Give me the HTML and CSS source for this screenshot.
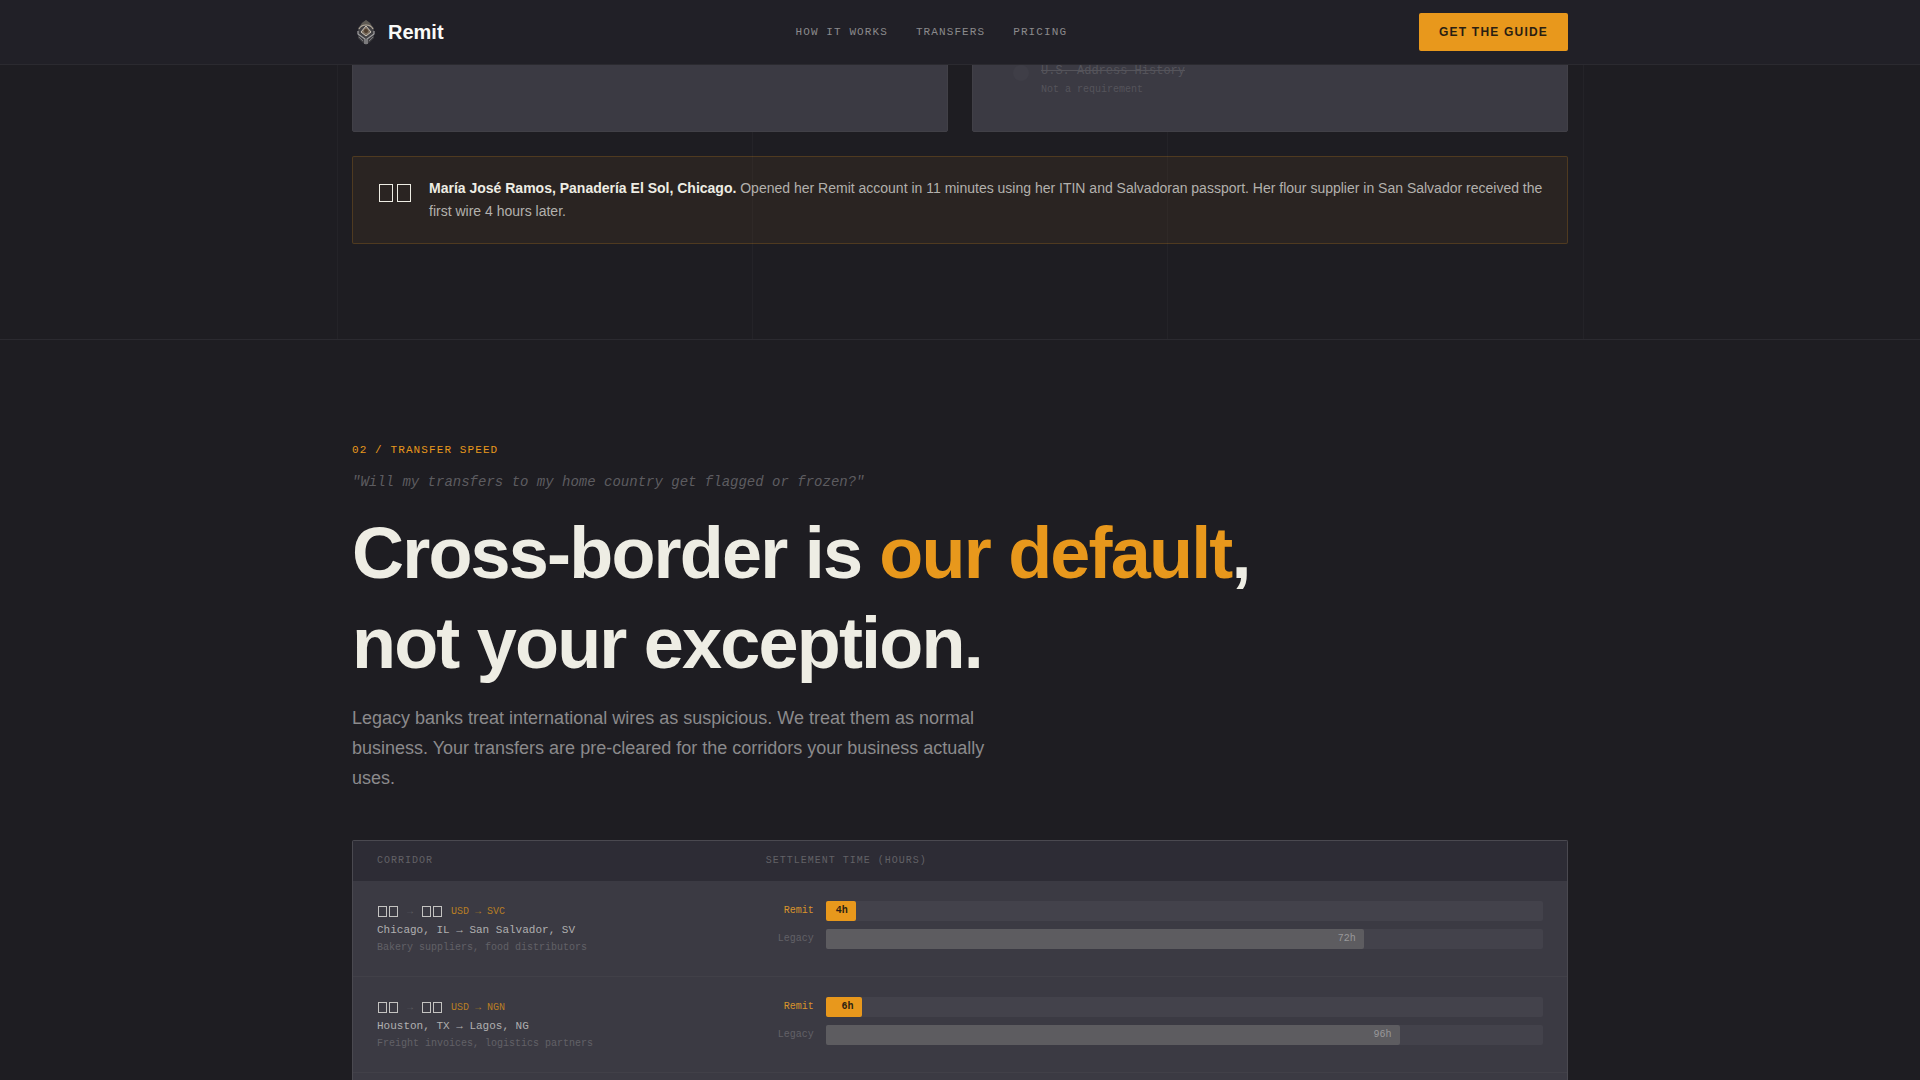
FILE: index.html
```html
<!DOCTYPE html>
<html lang="en">
<head>
<meta charset="utf-8">
<title>Remit</title>
<link rel="stylesheet" href="styles.css">
</head>
<body>
<header class="nav">
  <div class="wrap nav-inner">
    <a class="brand" href="#">
      <svg class="logo" viewBox="0 0 28 32" aria-hidden="true">
        <path d="M14 4 18 7 22 12v10l-4 4-4 3-4-3-4-4V12l4-5z" fill="#414043"/>
        <path d="M14 4 18 7 20 11 14 9 8 11 10 7z" fill="#5e5a54"/>
        <path d="M7 13q2-4 7-4t7 4" fill="none" stroke="#b5ab9c" stroke-width="1.2"/>
        <path d="M14 10 19 16 14 20 9 16z" fill="#796b5c" stroke="#c9c3b8"/>
        <circle cx="14" cy="15" r="2" fill="#4e3d2e"/>
        <path d="M6 15v3l7 5v5M22 15v3l-7 5v5" fill="none" stroke="#a2a1a3" stroke-width="1.2"/>
        <path d="M7 21l4 4M21 21l-4 4" fill="none" stroke="#77767a"/>
      </svg>
      <span>Remit</span>
    </a>
    <nav class="links">
      <a href="#how">How it works</a>
      <a href="#transfers">Transfers</a>
      <a href="#pricing">Pricing</a>
    </nav>
    <button class="cta" type="button">Get the guide</button>
  </div>
</header>
<main>
  <section class="docs" id="how">
    <div class="guides" aria-hidden="true"><i></i><i></i><i></i></div>
    <div class="wrap">
      <div class="cards">
        <div class="card"></div>
        <div class="card">
          <span class="dot"></span>
          <div>
            <s class="doc-name">U.S. Address History</s>
            <p class="doc-note">Not a requirement</p>
          </div>
        </div>
      </div>
      <div class="story">
        <span class="flag flag-large"><i></i><i></i></span>
        <p><strong>María José Ramos, Panadería El Sol, Chicago.</strong> Opened her Remit account in 11 minutes using her ITIN and Salvadoran passport. Her flour supplier in San Salvador received the first wire 4 hours later.</p>
      </div>
    </div>
  </section>
  <section class="speed" id="transfers">
    <div class="wrap">
      <p class="label">02 / Transfer speed</p>
      <p class="quote">"Will my transfers to my home country get flagged or frozen?"</p>
      <h2>Cross-border is <em>our default</em>,<br>not your exception.</h2>
      <p class="lead">Legacy banks treat international wires as suspicious. We treat them as normal business. Your transfers are pre-cleared for the corridors your business actually uses.</p>
      <div class="panel">
        <table>
          <thead>
            <tr><th class="corridor">Corridor</th><th>Settlement time (hours)</th></tr>
          </thead>
          <tbody>
            <tr>
              <td class="corridor">
                <div class="route"><span class="flag"><i></i><i></i></span><span class="arrow">→</span><span class="flag"><i></i><i></i></span><span class="pair">USD → SVC</span></div>
                <div class="cities">Chicago, IL → San Salvador, SV</div>
                <div class="uses">Bakery suppliers, food distributors</div>
              </td>
              <td>
                <div class="bar"><span class="who remit">Remit</span><div class="track"><div class="fill fast" style="width:4.2%">4h</div></div></div>
                <div class="bar"><span class="who">Legacy</span><div class="track"><div class="fill" style="width:75%">72h</div></div></div>
              </td>
            </tr>
            <tr>
              <td class="corridor">
                <div class="route"><span class="flag"><i></i><i></i></span><span class="arrow">→</span><span class="flag"><i></i><i></i></span><span class="pair">USD → NGN</span></div>
                <div class="cities">Houston, TX → Lagos, NG</div>
                <div class="uses">Freight invoices, logistics partners</div>
              </td>
              <td>
                <div class="bar"><span class="who remit">Remit</span><div class="track"><div class="fill fast" style="width:5%">6h</div></div></div>
                <div class="bar"><span class="who">Legacy</span><div class="track"><div class="fill" style="width:80%">96h</div></div></div>
              </td>
            </tr>
          </tbody>
        </table>
      </div>
    </div>
  </section>
</main>
</body>
</html>
```
FILE: styles.css
```css
* { box-sizing: border-box; margin: 0; padding: 0; }
:root {
  --bg: #1e1d22;
  --surface: #3b3a43;
  --line: #2b2a30;
  --edge: #4a4950;
  --gold: #e8981c;
  --ivory: #eeede4;
  --mono: "Liberation Mono", monospace;
}
body {
  display: flex;
  flex-direction: column;
  height: 100vh;
  overflow: hidden;
  background: var(--bg);
  color: var(--ivory);
  font-family: "Liberation Sans", sans-serif;
  font-size: 14px;
  line-height: 23px;
}
main { flex: 1; min-height: 0; display: flex; flex-direction: column; margin-top: -8px; }
a { color: inherit; text-decoration: none; }
.wrap { width: 100%; max-width: 1280px; margin: 0 auto; padding: 0 32px; }

.nav {
  position: sticky;
  top: 0;
  z-index: 2;
  background: #212027;
  border-bottom: 1px solid var(--line);
}
.nav-inner {
  display: flex;
  justify-content: space-between;
  align-items: center;
  height: 64px;
}
.brand { display: flex; align-items: center; gap: 8px; font-size: 20px; font-weight: 700; color: #fafaf7; }
.logo { width: 28px; height: 32px; }
.links { display: flex; gap: 28px; font-family: var(--mono); font-size: 11px; letter-spacing: 0.1em; text-transform: uppercase; color: #8b8a8c; }
.cta {
  height: 38px;
  padding: 0 20px;
  border: 0;
  border-radius: 2px;
  background: var(--gold);
  color: #2a1e12;
  font: 700 12px "Liberation Sans", sans-serif;
  letter-spacing: 0.1em;
  text-transform: uppercase;
}

.docs { position: relative; padding-bottom: 95px; border-bottom: 1px solid var(--line); }
.guides {
  position: absolute;
  inset: 0;
  width: 1247px;
  max-width: 100%;
  margin: 0 auto;
  display: grid;
  grid-template-columns: repeat(3, 1fr);
  border-left: 1px solid #242328;
}
.guides i { border-right: 1px solid #242328; }
.docs .wrap { position: relative; }
.cards { display: grid; grid-template-columns: 1fr 1fr; gap: 24px; margin-bottom: 24px; }
.card {
  display: flex;
  gap: 12px;
  height: 75px;
  padding: 3px 40px;
  background: var(--surface);
  border: 1px solid #414047;
  border-radius: 2px;
  font-family: var(--mono);
  color: #55545b;
}
.dot { width: 16px; height: 16px; margin-top: 4px; border-radius: 50%; background: #3f3e47; }
.doc-name { display: block; font-size: 12px; line-height: 20px; }
.doc-note { font-size: 10px; line-height: 18px; }
.story {
  display: flex;
  gap: 16px;
  padding: 20px 24px;
  background: rgba(232, 152, 28, 0.06);
  border: 1px solid rgba(232, 152, 28, 0.2);
  border-radius: 2px;
  color: #b3b1ad;
}
.story strong { color: var(--ivory); }

.flag { display: flex; gap: 2px; width: 22px; padding: 0 1px; }
.flag i { width: 9px; height: 11px; border: 1px solid #c4c3c1; }
.flag-large { gap: 4px; width: 36px; padding: 7px 2px; }
.flag-large i { width: 14px; height: 18px; border-color: var(--ivory); }

.speed { flex: 1; min-height: 0; padding-top: 101px; }
.speed .wrap { display: flex; flex-direction: column; height: 100%; }
.label { margin-bottom: 12px; font: 11px/18px var(--mono); letter-spacing: 0.1em; text-transform: uppercase; color: var(--gold); }
.quote { margin-bottom: 14px; font: italic 14px/23px var(--mono); color: #5d5c60; }
h2 { margin-bottom: 15px; font-size: 72px; line-height: 90px; letter-spacing: -0.025em; }
h2 em { font-style: normal; color: var(--gold); }
.lead { max-width: 640px; margin-bottom: 47px; font-size: 18px; line-height: 30px; color: #8b8a8c; }

.panel { flex: 1; background: var(--surface); border: 1px solid var(--edge); border-bottom: 0; border-radius: 2px 2px 0 0; }
table { width: 100%; border-spacing: 0; font-family: var(--mono); table-layout: fixed; }
th { height: 40px; padding-right: 24px; background: #2d2c35; text-align: left; font-size: 10px; line-height: 16px; font-weight: 400; letter-spacing: 0.1em; text-transform: uppercase; color: #626166; }
.corridor { width: 34%; padding-left: 24px; }
td { height: 96px; padding: 20px 24px 20px 0; vertical-align: top; border-bottom: 1px solid #414048; }
.route { display: flex; align-items: center; gap: 8px; height: 20px; }
.arrow { font-size: 10px; color: #5d5c62; }
.pair { font-size: 10px; color: #b97e24; }
.cities { font-size: 11px; line-height: 18px; color: #b0afb0; }
.uses { font-size: 10px; line-height: 17px; color: #626167; }
.bar { display: flex; align-items: center; gap: 12px; }
.bar + .bar { margin-top: 8px; }
.who { width: 48px; text-align: right; font-size: 10px; line-height: 16px; color: #626167; }
.remit { color: #d9942c; }
.track { flex: 1; height: 20px; background: #43424b; border-radius: 2px; }
.fill { height: 20px; padding-right: 8px; border-radius: 2px; background: #5d5c60; text-align: right; font-size: 10px; line-height: 20px; color: #99989a; }
.fast { background: var(--gold); color: #2a1e12; font-weight: 700; }
```
